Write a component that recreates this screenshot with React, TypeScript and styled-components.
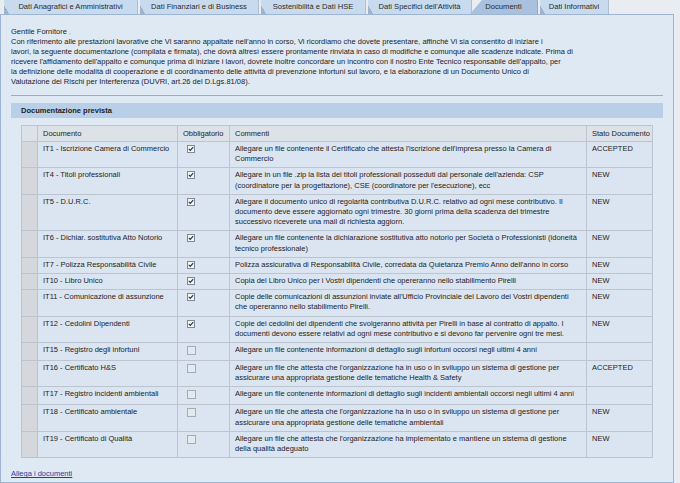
import React from "react";
import styled, { createGlobalStyle } from "styled-components";

const GlobalStyle = createGlobalStyle`
  html, body {
    margin: 0;
    padding: 0;
    background: #e9edf1;
  }
  body {
    font-family: "Liberation Sans", Arial, sans-serif;
    font-size: 7.5px;
    color: #222;
  }
`;

const Page = styled.div`
  width: 680px;
  height: 483px;
  overflow: hidden;
  display: flex;
  flex-direction: column;
`;

const TabBar = styled.div`
  display: flex;
  align-items: flex-end;
  gap: 2px;
  height: 14px;
  padding-left: 4px;
`;

const Tab = styled.div<{ $active?: boolean; $w: number }>`
  position: relative;
  width: ${(p) => p.$w}px;
  height: 14px;
  line-height: 13px;
  text-align: center;
  font-size: 7.6px;
  color: #2a2a2a;
  white-space: nowrap;
  background: ${(p) => (p.$active ? "#a7c1de" : "#c7daee")};
  border-right: 1px solid ${(p) => (p.$active ? "#8eaacb" : "#aebfd2")};
  box-sizing: border-box;
  ${(p) =>
    p.$active
      ? "clip-path: polygon(12px 0, 100% 0, 100% 100%, 0 100%); margin-left: -4px;"
      : ""}

  &::before {
    content: "";
    position: absolute;
    left: 0;
    bottom: 0;
    width: 5px;
    height: 9px;
    background: linear-gradient(to top right, #9fb3c9 50%, transparent 51%);
    display: ${(p) => (p.$active ? "none" : "block")};
  }
`;

const Panel = styled.div`
  flex: 1;
  background: #dfe9f4;
  border: 1px solid #9db5d2;
  border-right-color: #a6b5c6;
  width: 674px;
  box-sizing: border-box;
  padding: 12px 10px 0 10px;
`;

const Intro = styled.div`
  line-height: 10px;
  white-space: nowrap;
`;

const Comma = styled.span`
  color: #c8782a;
`;

const Rule = styled.div`
  height: 1px;
  background: #9eadbe;
  margin: 8px 0 7px;
`;

const SectionTitle = styled.div`
  height: 15px;
  line-height: 15px;
  background: #b8cfe7;
  font-weight: bold;
  padding-left: 10px;
`;

const Table = styled.table`
  margin: 7px 0 0 10px;
  width: 631px;
  border-collapse: collapse;
  table-layout: fixed;
  border: 1px solid #a3abb4;
`;

const HeadCell = styled.th<{ $w: number }>`
  width: ${(p) => p.$w}px;
  height: 16px;
  background: #dde2e8;
  font-weight: normal;
  text-align: left;
  white-space: nowrap;
  padding: 0 5px;
  border: 1px solid #bcc5cf;
  box-sizing: border-box;
`;

const Row = styled.tr`
  background: #dbe5f1;
`;

const GutterCell = styled.td`
  background: #d4d7dc;
  border: 1px solid #bcc5cf;
`;

const Cell = styled.td`
  vertical-align: top;
  padding: 2px 7px 3px 5px;
  line-height: 10.2px;
  border: 1px solid #bcc5cf;
`;

const Box = styled.span<{ $on: boolean }>`
  display: block;
  margin: 1px 0 0 4px;
  width: ${(p) => (p.$on ? 8 : 9)}px;
  height: ${(p) => (p.$on ? 8 : 9)}px;
  margin-bottom: ${(p) => (p.$on ? 0 : 2)}px;
  box-sizing: border-box;
  border: 1px solid ${(p) => (p.$on ? "#7f8a96" : "#a4adb7")};
  background: ${(p) => (p.$on ? "#f3f5f7" : "#e4e9ee")};
  svg {
    display: block;
  }
`;

const AttachLink = styled.a`
  display: inline-block;
  margin-top: 11px;
  color: #1f3f9a;
  text-decoration: underline;
`;

const tabs = [
  { label: "Dati Anagrafici e Amministrativi", w: 134 },
  { label: "Dati Finanziari e di Business", w: 119 },
  { label: "Sostenibilità e Dati HSE", w: 105 },
  { label: "Dati Specifici dell'Attività", w: 104 },
  { label: "Documenti", w: 68, active: true },
  { label: "Dati Informativi", w: 69 },
];

type Doc = { name: string; req: boolean; note: string; status: string };

const docs: Doc[] = [
  {
    name: "IT1 - Iscrizione Camera di Commercio",
    req: true,
    note: "Allegare un file contenente il Certificato che attesta l'iscrizione dell'impresa presso la Camera di Commercio",
    status: "ACCEPTED",
  },
  {
    name: "IT4 - Titoli professionali",
    req: true,
    note: "Allegare in un file .zip la lista dei titoli professionali posseduti dal personale dell'azienda: CSP (coordinatore per la progettazione), CSE (coordinatore per l'esecuzione), ecc",
    status: "NEW",
  },
  {
    name: "IT5 - D.U.R.C.",
    req: true,
    note: "Allegare il documento unico di regolarità contributiva D.U.R.C. relativo ad ogni mese contributivo. Il documento deve essere aggiornato ogni trimestre. 30 giorni prima della scadenza del trimestre successivo riceverete una mail di richiesta aggiorn.",
    status: "NEW",
  },
  {
    name: "IT6 - Dichiar. sostitutiva Atto Notorio",
    req: true,
    note: "Allegare un file contenente la dichiarazione sostitutiva atto notorio per Società o Professionisti (idoneità tecnico professionale)",
    status: "NEW",
  },
  {
    name: "IT7 - Polizza Responsabilità Civile",
    req: true,
    note: "Polizza assicurativa di Responsabilità Civile, corredata da Quietanza Premio Anno dell'anno in corso",
    status: "NEW",
  },
  {
    name: "IT10 - Libro Unico",
    req: true,
    note: "Copia del Libro Unico per i Vostri dipendenti che opereranno nello stabilimento Pirelli",
    status: "NEW",
  },
  {
    name: "IT11 - Comunicazione di assunzione",
    req: true,
    note: "Copie delle comunicazioni di assunzioni inviate all'Ufficio Provinciale del Lavoro dei Vostri dipendenti che opereranno nello stabilimento Pirelli.",
    status: "NEW",
  },
  {
    name: "IT12 - Cedolini Dipendenti",
    req: true,
    note: "Copie dei cedolini dei dipendenti che svolgeranno attività per Pirelli in base al contratto di appalto. I documenti devono essere relativi ad ogni mese contributivo e si devono far pervenire ogni tre mesi.",
    status: "NEW",
  },
  {
    name: "IT15 - Registro degli infortuni",
    req: false,
    note: "Allegare un file contenente informazioni di dettaglio sugli infortuni occorsi negli ultimi 4 anni",
    status: "",
  },
  {
    name: "IT16 - Certificato H&S",
    req: false,
    note: "Allegare un file che attesta che l'organizzazione ha in uso o in sviluppo un sistema di gestione per assicurare una appropriata gestione delle tematiche Health & Safety",
    status: "ACCEPTED",
  },
  {
    name: "IT17 - Registro incidenti ambientali",
    req: false,
    note: "Allegare un file contenente informazioni di dettaglio sugli incidenti ambientali occorsi negli ultimi 4 anni",
    status: "",
  },
  {
    name: "IT18 - Certificato ambientale",
    req: false,
    note: "Allegare un file che attesta che l'organizzazione ha in uso o in sviluppo un sistema di gestione per assicurare una appropriata gestione delle tematiche ambientali",
    status: "NEW",
  },
  {
    name: "IT19 - Certificato di Qualità",
    req: false,
    note: "Allegare un file che attesta che l'organizzazione ha implementato e mantiene un sistema di gestione della qualità adeguato",
    status: "NEW",
  },
];

const Check = ({ on }: { on: boolean }) => (
  <Box $on={on}>
    {on && (
      <svg width="6" height="6" viewBox="0 0 6 6">
        <path d="M0.8 2.8 L2.3 4.3 L5.2 1.2" fill="none" stroke="#333" strokeWidth="1.2" />
      </svg>
    )}
  </Box>
);

const App = () => {
  return (
    <Page>
      <GlobalStyle />
      <TabBar>
        {tabs.map((t) => (
          <Tab key={t.label} $w={t.w} $active={t.active}>
            {t.label}
          </Tab>
        ))}
      </TabBar>
      <Panel>
        <Intro>
          Gentile Fornitore <Comma>,</Comma>
          <br />
          Con riferimento alle prestazioni lavorative che Vi saranno appaltate nell'anno in corso, Vi ricordiamo che dovete presentare, affinchè Vi sia consentito di iniziare i
          <br />
          lavori, la seguente documentazione (compilata e firmata), che dovrà altresì essere prontamente rinviata in caso di modifiche e comunque alle scadenze indicate. Prima di
          <br />
          ricevere l'affidamento dell'appalto e comunque prima di iniziare i lavori, dovrete inoltre concordare un incontro con il nostro Ente Tecnico responsabile dell'appalto, per
          <br />
          la definizione delle modalità di cooperazione e di coordinamento delle attività di prevenzione infortuni sul lavoro, e la elaborazione di un Documento Unico di
          <br />
          Valutazione dei Rischi per Interferenza (DUVRI, art.26 del D.Lgs.81/08).
        </Intro>
        <Rule />
        <SectionTitle>Documentazione prevista</SectionTitle>
        <Table>
          <thead>
            <tr>
              <HeadCell $w={16} />
              <HeadCell $w={140}>Documento</HeadCell>
              <HeadCell $w={52}>Obbligatorio</HeadCell>
              <HeadCell $w={357}>Commenti</HeadCell>
              <HeadCell $w={66}>Stato Documento</HeadCell>
            </tr>
          </thead>
          <tbody>
            {docs.map((d) => (
              <Row key={d.name}>
                <GutterCell />
                <Cell>{d.name}</Cell>
                <Cell>
                  <Check on={d.req} />
                </Cell>
                <Cell>{d.note}</Cell>
                <Cell>{d.status}</Cell>
              </Row>
            ))}
          </tbody>
        </Table>
        <AttachLink href="#">Allega i documenti</AttachLink>
      </Panel>
    </Page>
  );
};

export default App;
